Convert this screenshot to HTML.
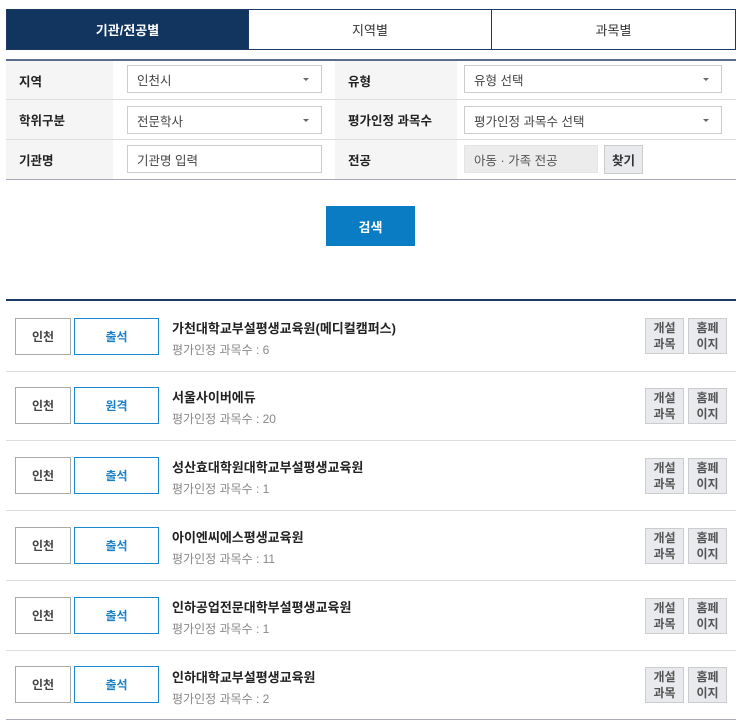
<!DOCTYPE html>
<html><head><meta charset="utf-8"><style>
*{box-sizing:border-box;margin:0;padding:0}
body{width:750px;height:728px;background:#fff;font-family:"Liberation Sans","Noto Sans CJK KR",sans-serif;color:#222;position:relative;overflow:hidden}
.abs{position:absolute}
.tab{position:absolute;top:9px;height:41px;border:1px solid #1d3a66;display:flex;align-items:center;justify-content:center;font-size:13px;color:#333}
.lab{position:absolute;background:#f5f5f5;font-size:12.5px;font-weight:bold;display:flex;align-items:center;padding-left:13px;color:#222}
.inp{position:absolute;height:28px;border:1px solid #ccc;background:#fff;font-size:12.5px;color:#444;display:flex;align-items:center;padding-left:9px}
.arr{position:absolute;right:12px;top:12px;width:0;height:0;border-left:3px solid transparent;border-right:3px solid transparent;border-top:3px solid #666}
.hl{position:absolute;left:6px;width:730px;height:1px;background:#ddd}
.b1{position:absolute;left:15px;width:56px;height:37px;border:1px solid #aaa;font-size:12px;font-weight:bold;color:#444;display:flex;align-items:center;justify-content:center}
.b2{position:absolute;left:74px;width:85px;height:37px;border:1px solid #1a88cf;font-size:12px;font-weight:bold;color:#1a7fc6;display:flex;align-items:center;justify-content:center}
.t{position:absolute;left:172px;font-size:13px;font-weight:bold;color:#222}
.s{position:absolute;left:172px;font-size:12px;color:#888}
.sb{position:absolute;width:39px;height:36px;background:#e8eaee;border:1px solid #ccc;font-size:12px;font-weight:bold;color:#555;text-align:center;line-height:16px;padding-top:1px}
</style></head><body>
<div class="tab" style="left:6px;width:243px;background:#12355f;color:#fff;font-weight:bold">기관/전공별</div>
<div class="tab" style="left:248px;width:244px;background:#fff">지역별</div>
<div class="tab" style="left:491px;width:245px;background:#fff">과목별</div>

<div class="abs" style="left:6px;top:59px;width:730px;height:2px;background:#5a6e8c"></div>
<div class="lab" style="left:6px;top:61px;width:107px;height:38px">지역</div>
<div class="lab" style="left:6px;top:100px;width:107px;height:39px">학위구분</div>
<div class="lab" style="left:6px;top:140px;width:107px;height:39px">기관명</div>
<div class="lab" style="left:335px;top:61px;width:122px;height:38px">유형</div>
<div class="lab" style="left:335px;top:100px;width:122px;height:39px">평가인정 과목수</div>
<div class="lab" style="left:335px;top:140px;width:122px;height:39px">전공</div>
<div class="hl" style="top:99px"></div>
<div class="hl" style="top:139px"></div>
<div class="abs" style="left:6px;top:179px;width:730px;height:1px;background:#aab"></div>

<div class="inp" style="left:127px;top:65px;width:195px">인천시<i class="arr"></i></div>
<div class="inp" style="left:127px;top:106px;width:195px">전문학사<i class="arr"></i></div>
<div class="inp" style="left:127px;top:145px;width:195px">기관명 입력</div>
<div class="inp" style="left:464px;top:65px;width:258px">유형 선택<i class="arr"></i></div>
<div class="inp" style="left:464px;top:106px;width:258px">평가인정 과목수 선택<i class="arr"></i></div>
<div class="inp" style="left:464px;top:145px;width:134px;background:#ececec;border-color:#e4e4e4;color:#555">아동 · 가족 전공</div>
<div class="abs" style="left:604px;top:145px;width:39px;height:29px;background:#e8eaee;border:1px solid #ccc;font-size:12.5px;font-weight:bold;color:#333;display:flex;align-items:center;justify-content:center">찾기</div>

<div class="abs" style="left:326px;top:206px;width:89px;height:40px;background:#0a7cc4;color:#fff;font-size:13px;font-weight:bold;display:flex;align-items:center;justify-content:center">검색</div>

<div class="abs" style="left:6px;top:299px;width:730px;height:2px;background:#1d3a66"></div>

<div class="b1" style="top:318px">인천</div><div class="b2" style="top:318px">출석</div>
<div class="t" style="top:318px">가천대학교부설평생교육원(메디컬캠퍼스)</div><div class="s" style="top:341px">평가인정 과목수 : 6</div>
<div class="sb" style="left:645px;top:318px">개설<br>과목</div><div class="sb" style="left:688px;top:318px">홈페<br>이지</div>
<div class="hl" style="top:371px"></div>

<div class="b1" style="top:387px">인천</div><div class="b2" style="top:387px">원격</div>
<div class="t" style="top:387px">서울사이버에듀</div><div class="s" style="top:410px">평가인정 과목수 : 20</div>
<div class="sb" style="left:645px;top:388px">개설<br>과목</div><div class="sb" style="left:688px;top:388px">홈페<br>이지</div>
<div class="hl" style="top:440px"></div>

<div class="b1" style="top:457px">인천</div><div class="b2" style="top:457px">출석</div>
<div class="t" style="top:457px">성산효대학원대학교부설평생교육원</div><div class="s" style="top:480px">평가인정 과목수 : 1</div>
<div class="sb" style="left:645px;top:458px">개설<br>과목</div><div class="sb" style="left:688px;top:458px">홈페<br>이지</div>
<div class="hl" style="top:510px"></div>

<div class="b1" style="top:527px">인천</div><div class="b2" style="top:527px">출석</div>
<div class="t" style="top:527px">아이엔씨에스평생교육원</div><div class="s" style="top:550px">평가인정 과목수 : 11</div>
<div class="sb" style="left:645px;top:528px">개설<br>과목</div><div class="sb" style="left:688px;top:528px">홈페<br>이지</div>
<div class="hl" style="top:580px"></div>

<div class="b1" style="top:597px">인천</div><div class="b2" style="top:597px">출석</div>
<div class="t" style="top:597px">인하공업전문대학부설평생교육원</div><div class="s" style="top:620px">평가인정 과목수 : 1</div>
<div class="sb" style="left:645px;top:598px">개설<br>과목</div><div class="sb" style="left:688px;top:598px">홈페<br>이지</div>
<div class="hl" style="top:650px"></div>

<div class="b1" style="top:666px">인천</div><div class="b2" style="top:666px">출석</div>
<div class="t" style="top:667px">인하대학교부설평생교육원</div><div class="s" style="top:690px">평가인정 과목수 : 2</div>
<div class="sb" style="left:645px;top:667px">개설<br>과목</div><div class="sb" style="left:688px;top:667px">홈페<br>이지</div>
<div class="hl" style="top:719px;background:#aab"></div>
</body></html>
